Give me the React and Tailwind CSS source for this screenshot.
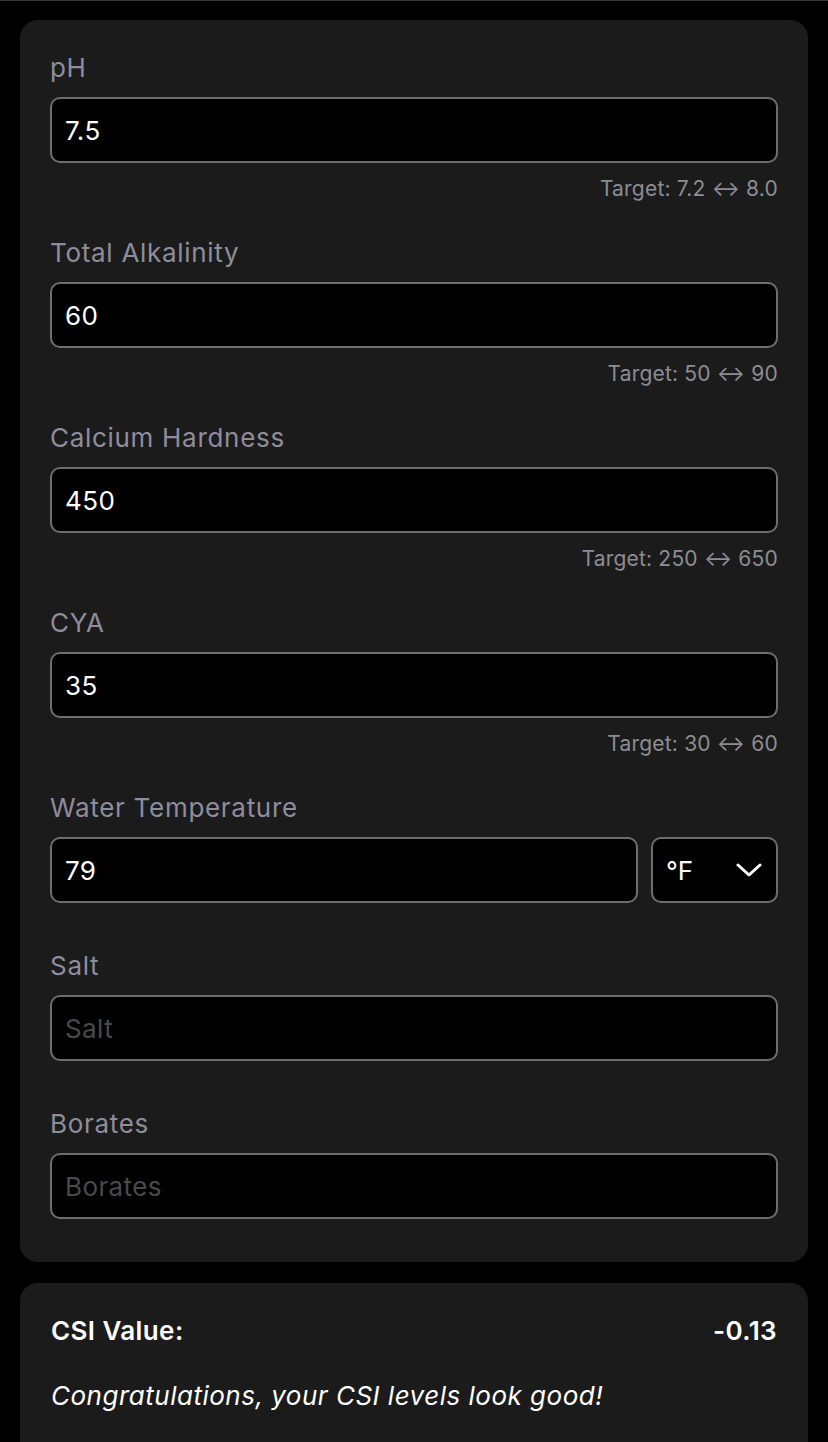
import React, { useState } from 'react';

const font = { fontFamily: 'Inter, "Noto Sans", sans-serif' };

const fields = [
  { label: 'pH', value: '7.5', target: 'Target: 7.2 ↔ 8.0' },
  { label: 'Total Alkalinity', value: '60', target: 'Target: 50 ↔ 90' },
  { label: 'Calcium Hardness', value: '450', target: 'Target: 250 ↔ 650' },
  { label: 'CYA', value: '35', target: 'Target: 30 ↔ 60' },
];

const inputCls =
  'h-[66px] w-full rounded-[10px] border-2 border-[#6e6e70] bg-black px-[13px] text-[26px] tracking-[0.4px] text-white outline-none placeholder:text-[#4a4a4c]';

const Field = ({ label, value, target, placeholder, last, children }) => (
  <div className={target ? 'mb-[36px]' : last ? '' : 'mb-[47px]'}>
    <label className="mb-[14px] block text-[26px] leading-[31px] tracking-[0.7px] text-[#8f8d9b]">{label}</label>
    {children || (
      <input className={inputCls} defaultValue={value} placeholder={placeholder} />
    )}
    {target && (
      <p className="mt-[13px] text-right text-[21px] leading-[25px] tracking-[0.2px] text-[#8d8c95]">{target}</p>
    )}
  </div>
);

const App = () => {
  const [unit, setUnit] = useState('°F');

  return (
    <div className="min-h-[1442px] border-t border-[#333335] bg-black px-5 pt-[19px]" style={font}>
      {/* Inputs card */}
      <div className="rounded-[18px] bg-[#1b1b1b] px-[30px] pt-[32px] pb-[43px]">
        {fields.map((f) => (
          <Field key={f.label} {...f} />
        ))}

        <Field label="Water Temperature">
          <div className="flex gap-[13px]">
            <input className={inputCls + ' flex-1'} defaultValue="79" />
            <button
              onClick={() => setUnit(unit === '°F' ? '°C' : '°F')}
              className="flex h-[66px] w-[127px] items-center justify-between rounded-[10px] border-2 border-[#6e6e70] bg-black pl-[13px] pr-[14px] text-[26px] text-white"
            >
              <span>{unit}</span>
              <svg width="26" height="16" viewBox="0 0 26 16" fill="none">
                <path d="M2 3l11 10L24 3" stroke="white" strokeWidth="3" strokeLinecap="round" strokeLinejoin="round" />
              </svg>
            </button>
          </div>
        </Field>

        <Field label="Salt" placeholder="Salt" />
        <Field label="Borates" placeholder="Borates" last />
      </div>

      {/* Result card */}
      <div className="mt-[21px] rounded-t-[18px] bg-[#1b1b1b] px-[31px] pt-[30px] pb-10">
        <div className="flex items-center justify-between text-[26px] font-semibold leading-[36px] tracking-[0.4px] text-white">
          <span>CSI Value:</span>
          <span>-0.13</span>
        </div>
        <p className="mt-[29px] text-[26px] italic leading-[36px] tracking-[0.5px] text-white">
          Congratulations, your CSI levels look good!
        </p>
      </div>
    </div>
  );
};

export default App;
